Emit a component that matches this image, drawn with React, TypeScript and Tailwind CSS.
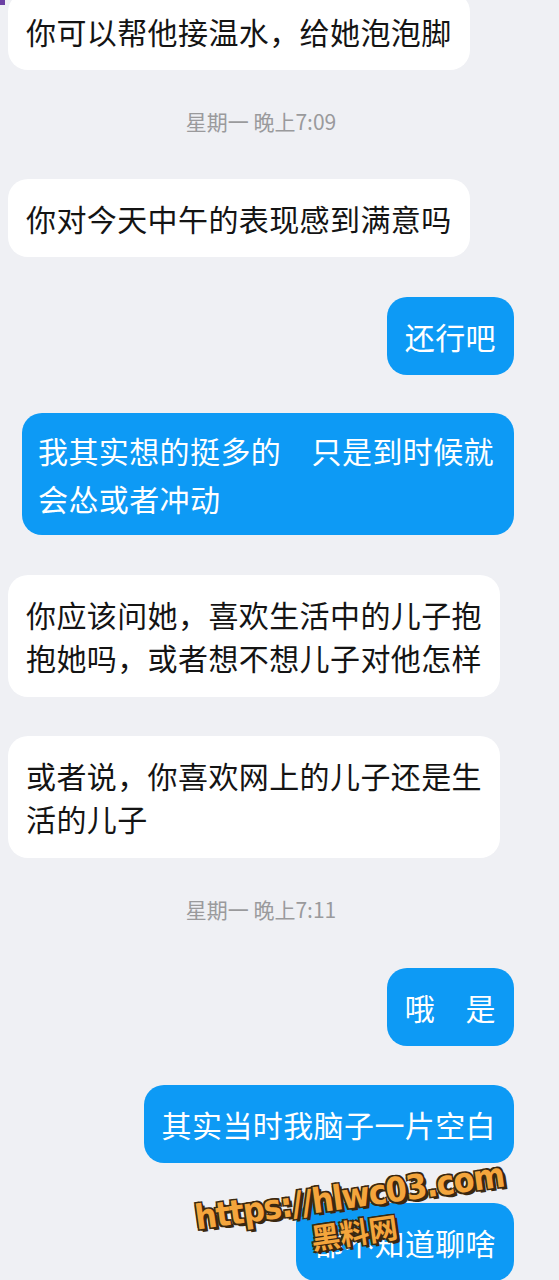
const font = '[font-family:"Noto_Sans_CJK_SC","Noto_Sans",sans-serif]';

function Left({ lines, tall }: { lines: string[]; tall?: boolean }) {
  return (
    <div className="flex justify-start pl-[8px]">
      <div
        className={`bg-white text-[#141414] rounded-[20px] px-[18px] text-[30px] tracking-[0.4px] max-w-[494px] ${
          tall ? 'leading-[43px] py-[18px]' : 'leading-[42px] py-[18px]'
        }`}
      >
        {lines.map((l, i) => (
          <div key={i} className="whitespace-nowrap">
            {l}
          </div>
        ))}
      </div>
    </div>
  );
}

function Right({ lines, tall }: { lines: string[]; tall?: boolean }) {
  return (
    <div className="flex justify-end pr-[45px]">
      <div
        className={`bg-[#0d9af5] text-white rounded-[20px] px-[18px] text-[30px] tracking-[0.4px] max-w-[494px] ${
          tall ? 'leading-[48px] py-[13px] pl-[16px] pr-[20px]' : 'leading-[42px] py-[18px]'
        }`}
      >
        {lines.map((l, i) => (
          <div key={i} className="whitespace-nowrap">
            {l}
          </div>
        ))}
      </div>
    </div>
  );
}

function Stamp({ text }: { text: string }) {
  return (
    <div className="flex justify-center pr-[37px] text-[21px] leading-[28px] text-[#9a9a9c]">
      {text}
    </div>
  );
}

export default function App() {
  return (
    <div className={`relative w-[559px] h-[1280px] overflow-hidden bg-[#eff0f4] ${font}`}>
      {/* tiny purple corner mark */}
      <div className="absolute left-0 top-0 w-[5px] h-[5px] bg-[#6b3fa3]" />

      <div className="flex flex-col mt-[-8px]">
        <Left lines={['你可以帮他接温水，给她泡泡脚']} />
        <div className="mt-[37px]">
          <Stamp text="星期一 晚上7:09" />
        </div>
        <div className="mt-[44px]">
          <Left lines={['你对今天中午的表现感到满意吗']} />
        </div>
        <div className="mt-[40px]">
          <Right lines={['还行吧']} />
        </div>
        <div className="mt-[38px]">
          <Right tall lines={['我其实想的挺多的　只是到时候就', '会怂或者冲动']} />
        </div>
        <div className="mt-[40px]">
          <Left tall lines={['你应该问她，喜欢生活中的儿子抱', '抱她吗，或者想不想儿子对他怎样']} />
        </div>
        <div className="mt-[39px]">
          <Left tall lines={['或者说，你喜欢网上的儿子还是生', '活的儿子']} />
        </div>
        <div className="mt-[37px]">
          <Stamp text="星期一 晚上7:11" />
        </div>
        <div className="mt-[45px]">
          <Right lines={['哦　是']} />
        </div>
        <div className="mt-[39px]">
          <Right lines={['其实当时我脑子一片空白']} />
        </div>
        <div className="mt-[40px]">
          <Right lines={['都不知道聊啥']} />
        </div>
      </div>

      {/* watermark */}
      <div className="absolute left-[196px] top-[1178px] w-[310px] rotate-[-8deg] origin-center">
        <div className="text-[34px] leading-[36px] font-bold tracking-[-1px] whitespace-nowrap text-[#f4a53c] [font-family:'DejaVu_Sans_Condensed','DejaVu_Sans',sans-serif] [text-shadow:1.5px_1.5px_0_#3a2810,-1.5px_-1.5px_0_#3a2810,1.5px_-1.5px_0_#3a2810,-1.5px_1.5px_0_#3a2810,3px_3px_0_#3a2810]">
          https://hlwc03.com
        </div>
        <div className="pl-[112px] text-[29px] leading-[34px] font-bold text-[#f4a53c] [text-shadow:1.5px_1.5px_0_#3a2810,-1.5px_-1.5px_0_#3a2810,1.5px_-1.5px_0_#3a2810,-1.5px_1.5px_0_#3a2810,3px_3px_0_#3a2810]">
          黑料网
        </div>
      </div>
    </div>
  );
}
